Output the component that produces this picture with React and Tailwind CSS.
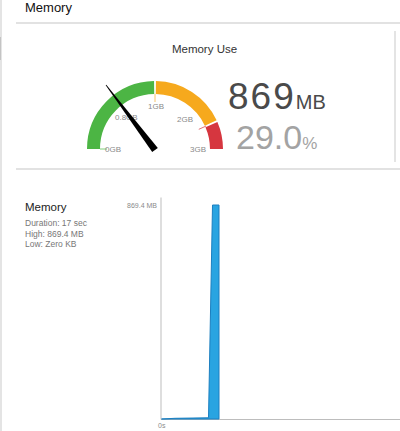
import React from 'react'

// gauge geometry, svg-local coords
const CX = 75
const CY = 73
const pt = (deg, r) => {
  const a = (deg * Math.PI) / 180
  return [CX + r * Math.cos(a), CY - r * Math.sin(a)]
}
const arc = (from, to, r) => {
  const [x1, y1] = pt(from, r)
  const [x2, y2] = pt(to, r)
  return `M${x1} ${y1} A${r} ${r} 0 0 1 ${x2} ${y2}`
}
const tick = (deg, r1, r2) => {
  const [x1, y1] = pt(deg, r1)
  const [x2, y2] = pt(deg, r2)
  return { x1, y1, x2, y2 }
}

const labels = [
  { t: '0GB', x: 25, y: 76 },
  { t: '0.8GB', x: 35, y: 44 },
  { t: '1GB', x: 68, y: 33 },
  { t: '2GB', x: 97, y: 46 },
  { t: '3GB', x: 110, y: 76 },
]

function Gauge() {
  return (
    <svg width="149" height="80" viewBox="0 0 149 80" className="shrink-0 overflow-visible">
      <path d={arc(180, 90.8, 61.5)} stroke="#4cb544" strokeWidth="13" fill="none" />
      <path d={arc(89.2, 25, 61.5)} stroke="#f6a91d" strokeWidth="13" fill="none" />
      <path d={arc(23.4, 0, 61.5)} stroke="#d6363f" strokeWidth="13" fill="none" />
      <line {...tick(180, 48, 55)} stroke="#7fcf78" strokeWidth="1" />
      <line {...tick(90, 47, 55)} stroke="#f8c36a" strokeWidth="1" />
      <line {...tick(24.2, 48, 56)} stroke="#e46f75" strokeWidth="1" />
      {labels.map((l) => (
        <text
          key={l.t}
          x={l.x}
          y={l.y}
          fontSize="8"
          fill="#8a8a8a"
          fontFamily="'Liberation Sans', Arial, sans-serif"
        >
          {l.t}
        </text>
      ))}
      <polygon points="26.3,8.8 25.7,9.2 72.2,76.1 77.8,71.9" fill="#000" />
    </svg>
  )
}

function Chart() {
  return (
    <svg width="280" height="241" viewBox="0 0 280 241" className="shrink-0 overflow-visible">
      <line x1="41" y1="7.5" x2="41" y2="229.5" stroke="#bdbdbd" strokeWidth="1" />
      <line x1="41" y1="229.5" x2="280" y2="229.5" stroke="#bdbdbd" strokeWidth="1" />
      <polygon
        points="41.5,229 55,228.3 88.5,227.8 92.5,15 99,15 99,229 41.5,229"
        fill="#29a4e1"
        stroke="#1c7fc0"
        strokeWidth="1"
        strokeLinejoin="round"
      />
      <text
        x="37"
        y="17.5"
        fontSize="7"
        fill="#8a8a8a"
        textAnchor="end"
        fontFamily="'Liberation Sans', Arial, sans-serif"
      >
        869.4 MB
      </text>
      <text x="38" y="237.5" fontSize="7" fill="#8a8a8a" fontFamily="'Liberation Sans', Arial, sans-serif">
        0s
      </text>
    </svg>
  )
}

export default function App() {
  return (
    <div className="w-[400px] h-[431px] flex bg-white overflow-hidden font-['Liberation_Sans',Arial,sans-serif]">
      {/* left edge strip */}
      <div className="w-[2px] shrink-0 bg-[#e4e4e4]">
        <div className="mt-[37px] h-[23px] w-[1px] bg-[#c4c4c4]" />
      </div>

      <div className="flex-1 flex flex-col min-w-0">
        {/* header */}
        <div className="h-[22px] pl-[23px] text-[13px] leading-[16px] text-[#111]">Memory</div>
        <div className="ml-[14px] h-[2px] bg-[#e2e2e2]" />

        {/* gauge panel */}
        <div className="pt-[7px] pb-[6px]">
          <div className="h-[131px] mr-[4px] border-r-2 border-[#e4e4e4] flex flex-col">
            <div className="mt-[11px] pl-[13px] text-center text-[11.5px] leading-[14px] text-[#333]">
              Memory Use
            </div>
            <div className="mt-[20px] flex items-start">
              <div className="ml-[78px]">
                <Gauge />
              </div>
              <div className="ml-[-1px] mt-[2px] flex flex-col">
                <div className="text-[37px] leading-[37px] tracking-[2px] text-[#4a4a4a] whitespace-nowrap">
                  869<span className="text-[20px] leading-none tracking-normal">MB</span>
                </div>
                <div className="mt-[5px] pl-[8px] text-[34px] leading-[34px] text-[#a3a3a3] whitespace-nowrap">
                  29.0<span className="text-[17px] leading-none">%</span>
                </div>
              </div>
            </div>
          </div>
        </div>
        <div className="ml-[14px] h-[2px] bg-[#e2e2e2]" />

        {/* memory chart */}
        <div className="flex flex-1">
          <div className="w-[118px] shrink-0 pl-[23px] pt-[30px]">
            <div className="text-[11.5px] leading-[14px] text-[#222]">Memory</div>
            <div className="mt-[4px] text-[8.5px] leading-[10.7px] text-[#777] whitespace-nowrap">
              <div>Duration: 17 sec</div>
              <div>High: 869.4 MB</div>
              <div>Low: Zero KB</div>
            </div>
          </div>
          <div className="mt-[20px]">
            <Chart />
          </div>
        </div>
      </div>
    </div>
  )
}
